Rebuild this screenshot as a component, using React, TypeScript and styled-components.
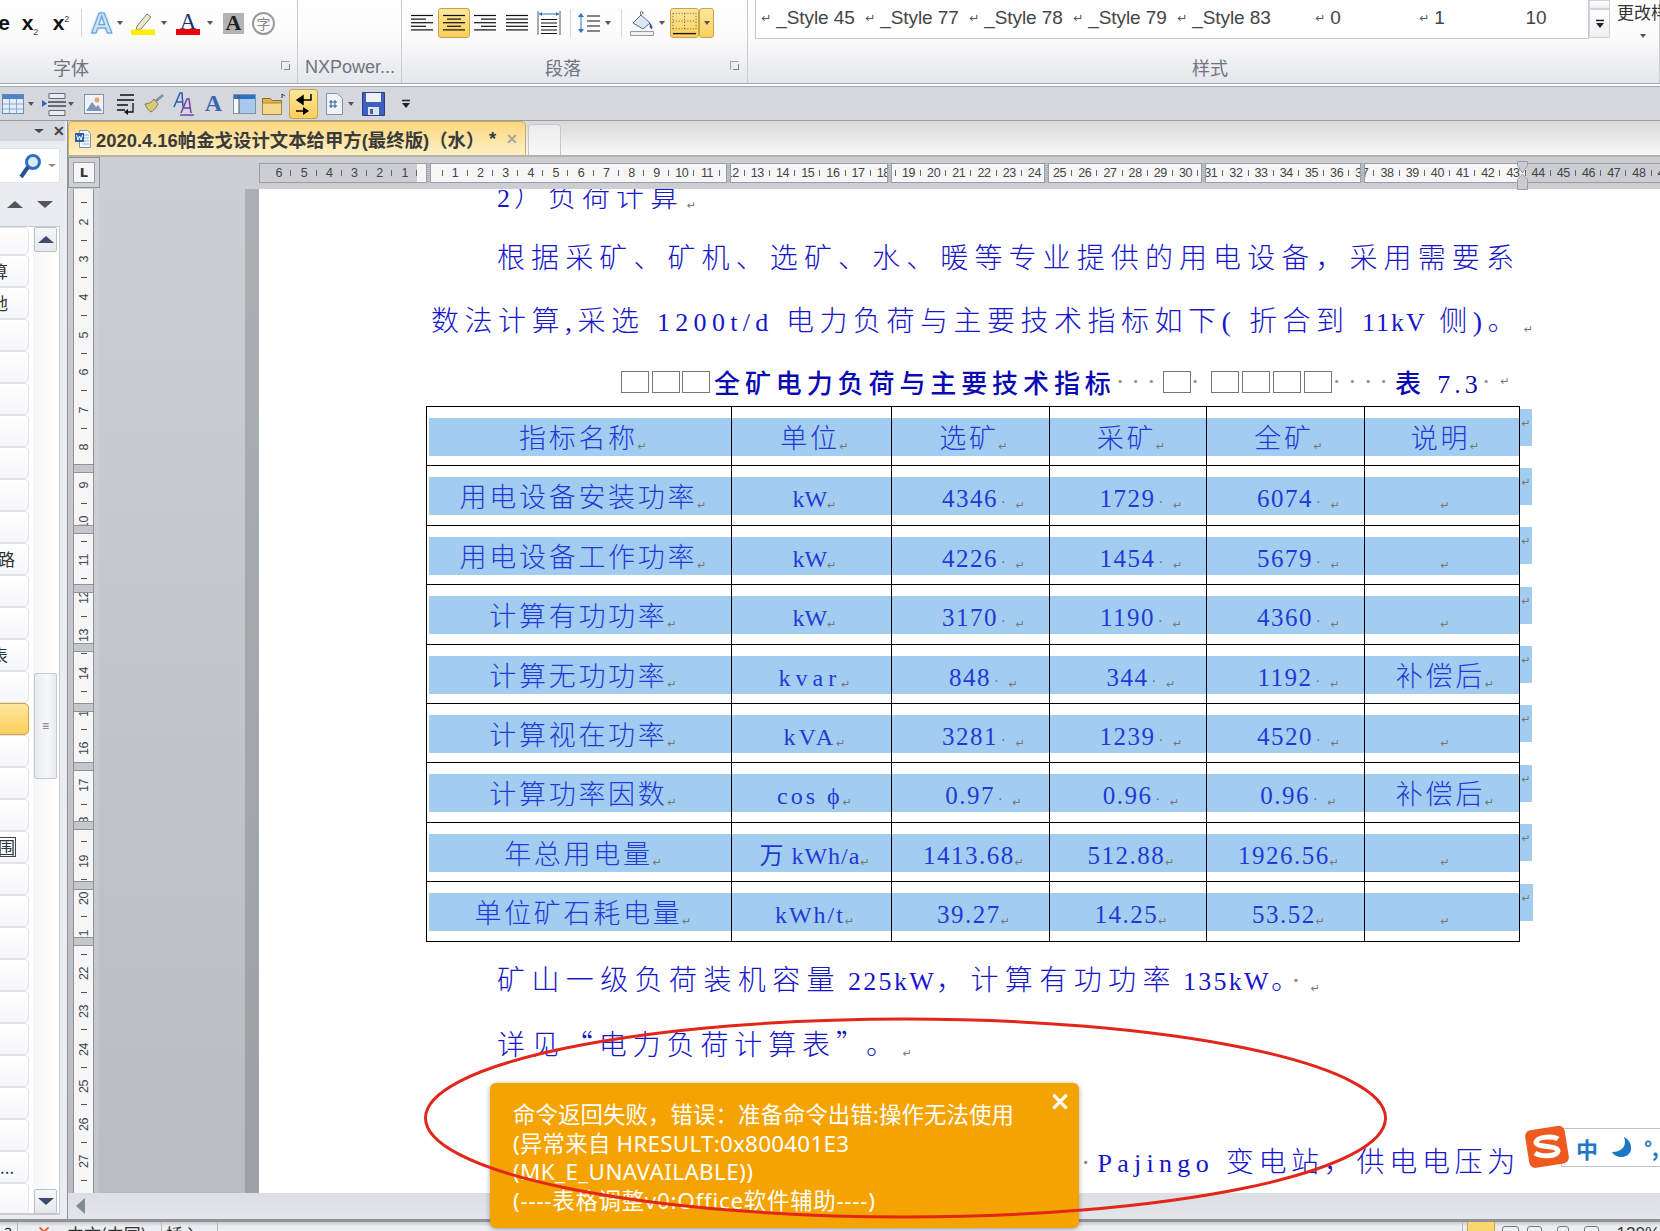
import React from 'react';
import styled, { createGlobalStyle } from 'styled-components';

const CJK = '"Noto Sans CJK SC", sans-serif';
const DOC_FONT = '"Liberation Serif", "Noto Sans CJK SC", serif';
const UI_FONT = '"Liberation Sans", "Noto Sans CJK SC", sans-serif';

const GlobalStyle = createGlobalStyle`
  html, body { margin: 0; padding: 0; background: #fff; }
  * { box-sizing: border-box; }
`;

const Screen = styled.div`
  position: relative;
  width: 1660px;
  height: 1231px;
  overflow: hidden;
  display: flex;
  flex-direction: column;
  font-family: ${UI_FONT};
`;

/* ribbon */
const Ribbon = styled.div`
  display: flex;
  flex: none;
  height: 87px;
  overflow: hidden;
  background: linear-gradient(#ffffff 0%, #fbfbfc 45%, #e6e8ec 95%);
  border-bottom: 4px double #a0a4ac;
`;

const Group = styled.div<{ $w: number; $grow?: boolean }>`
  display: flex;
  flex-direction: column;
  flex: ${(p) => (p.$grow ? '1' : 'none')};
  width: ${(p) => p.$w}px;
  height: 83px;
  border-right: 1px solid #c9ccd1;
`;

const Tools = styled.div<{ $top?: boolean }>`
  display: flex;
  align-items: ${(p) => (p.$top ? 'flex-start' : 'center')};
  height: 46px;
  flex: none;
`;

const GroupLabel = styled.div<{ $pad: number }>`
  display: flex;
  align-items: center;
  height: 30px;
  margin-top: 6px;
  padding-left: ${(p) => p.$pad}px;
  font-size: 18px;
  color: #6e7580;
  white-space: nowrap;
`;

const Launcher = styled.span<{ $x: number }>`
  position: absolute;
  left: ${(p) => p.$x}px;
  top: 61px;
  width: 9px;
  height: 9px;
  border: 1px solid #9ba0a8;
  border-right-color: transparent;
  border-bottom-color: transparent;
  &::after {
    content: '';
    position: absolute;
    right: -1px;
    bottom: -1px;
    width: 5px;
    height: 5px;
    border-right: 1px solid #7f858e;
    border-bottom: 1px solid #7f858e;
  }
`;

const Slot = styled.span<{ $ml?: number; $w: number; $active?: boolean }>`
  display: inline-flex;
  align-items: center;
  justify-content: center;
  flex: none;
  height: 30px;
  margin-left: ${(p) => p.$ml ?? 0}px;
  width: ${(p) => p.$w}px;
  border-radius: 3px;
  border: ${(p) => (p.$active ? '1px solid #c9a24a' : 'none')};
  background: ${(p) => (p.$active ? 'linear-gradient(#fde79a, #fbcf5c)' : 'transparent')};
`;

const Caret = styled.span<{ $ml?: number }>`
  flex: none;
  width: 0;
  height: 0;
  margin-left: ${(p) => p.$ml ?? 0}px;
  border-left: 3.5px solid transparent;
  border-right: 3.5px solid transparent;
  border-top: 4px solid #555;
`;

const Sep = styled.span<{ $ml: number }>`
  flex: none;
  width: 1px;
  height: 28px;
  margin-left: ${(p) => p.$ml}px;
  background: #d5d7db;
`;

const Script = styled.span`
  font: bold 21px "Liberation Sans", sans-serif;
  color: #111;
  sub, sup { font-size: 9px; font-weight: normal; color: #345; line-height: 0; }
`;

const GlowA = styled.span`
  font: bold 30px "Liberation Sans", sans-serif;
  color: #cfe4f7;
  -webkit-text-stroke: 1px #5b9bd5;
  text-shadow: 0 0 3px #9cc9ee;
`;

const ColorA = styled.span<{ $bar: string }>`
  display: flex;
  align-items: flex-start;
  justify-content: center;
  width: 24px;
  height: 23px;
  font: 23px/19px "Liberation Serif", serif;
  color: #22306b;
  border-bottom: 6px solid ${(p) => p.$bar};
`;

const ShadeA = styled.span`
  display: flex;
  align-items: center;
  justify-content: center;
  width: 21px;
  height: 21px;
  background: #b4b4b4;
  font: bold 22px "Liberation Serif", serif;
  color: #222;
`;

const CircleChar = styled.span`
  display: flex;
  align-items: center;
  justify-content: center;
  width: 23px;
  height: 23px;
  border: 2px solid #9b9b9b;
  border-radius: 50%;
  font-family: ${CJK};
  font-size: 14px;
  color: #888;
`;

const StyleBox = styled.div`
  display: flex;
  align-items: center;
  flex: none;
  margin-left: 7px;
  width: 834px;
  height: 39px;
  background: #fff;
  border: 1px solid #c8cbd0;
  border-top: none;
`;

const StyleCell = styled.span`
  display: flex;
  align-items: center;
  justify-content: center;
  flex: none;
  width: 104px;
  margin-top: -2px;
  font: 19px "Liberation Sans", sans-serif;
  letter-spacing: -0.1px;
  color: #444;
  white-space: nowrap;
  i {
    font: 12px "DejaVu Sans", sans-serif;
    margin-right: 5px;
    color: #555;
  }
`;

const StyleScroll = styled.div`
  display: flex;
  flex-direction: column;
  flex: none;
  width: 21px;
  height: 38px;
`;

const ScrollStep = styled.div<{ $h: number }>`
  display: flex;
  align-items: center;
  justify-content: center;
  height: ${(p) => p.$h}px;
  border: 1px solid #cfd2d6;
  background: linear-gradient(#fff, #eef0f3);
`;

const ChangeStyle = styled.div`
  position: relative;
  flex: none;
  width: 51px;
  padding: 2px 0 0 7px;
  font-family: ${CJK};
  font-size: 17px;
  line-height: 20px;
  color: #333;
  white-space: nowrap;
  overflow: hidden;
  height: 44px;
  ${Caret} {
    position: absolute;
    left: 30px;
    top: 34px;
  }
`;

/* quick toolbar */
const QuickBar = styled.div`
  display: flex;
  align-items: center;
  flex: none;
  height: 34px;
  background: #d4d7dc;
  border-bottom: 1px solid #979ca4;
`;

const BlueA = styled.span`
  font: bold 24px "Liberation Serif", serif;
  color: #3a66b0;
`;

/* workspace */
const Workspace = styled.div`
  display: flex;
  flex: none;
  height: 1098px;
`;

const LeftPanel = styled.div`
  display: flex;
  flex-direction: column;
  flex: none;
  width: 68px;
  height: 1098px;
  background: #e9ecf0;
  border-right: 1px solid #8f9398;
`;

const PanelHead = styled.div`
  display: flex;
  align-items: center;
  height: 20px;
  width: 65px;
  padding-left: 34px;
  background: #d5d8dd;
  font: bold 14px "Liberation Sans", sans-serif;
  color: #444;
  gap: 9px;
`;

const SearchBox = styled.div`
  display: flex;
  align-items: center;
  margin-top: 7px;
  height: 35px;
  width: 60px;
  padding-left: 19px;
  gap: 7px;
  background: #fff;
  border: 1px solid #dfe2e6;
  border-left: none;
`;

const NavRow = styled.div`
  display: flex;
  align-items: center;
  height: 43px;
  padding-left: 7px;
  gap: 14px;
`;

const Tri = styled.span<{ $down?: boolean; $w?: number; $c?: string }>`
  width: 0;
  height: 0;
  flex: none;
  border-left: ${(p) => p.$w ?? 8}px solid transparent;
  border-right: ${(p) => p.$w ?? 8}px solid transparent;
  ${(p) => (p.$down ? 'border-top' : 'border-bottom')}: ${(p) => (p.$w ?? 8) - 1}px solid ${(p) => p.$c ?? '#555'};
`;

const NavList = styled.div`
  display: flex;
  width: 60px;
  height: 989px;
  background: #fff;
  border: 1px solid #c8ccd1;
  border-left: none;
  border-bottom-width: 2px;
`;

const Rows = styled.div`
  flex: none;
  width: 33px;
  overflow: hidden;
`;

const NavRowItem = styled.div<{ $first?: boolean; $on?: boolean }>`
  display: flex;
  align-items: center;
  width: 29px;
  height: ${(p) => (p.$first ? 28 : 32)}px;
  overflow: hidden;
  border: 1px solid ${(p) => (p.$on ? '#c9a24a' : '#e2e4e8')};
  border-left: none;
  border-radius: 0 5px 5px 0;
  background: ${(p) => (p.$on ? 'linear-gradient(#fde79a, #fbcf5c)' : 'linear-gradient(#fff, #f6f7f9)')};
  font-family: ${CJK};
  font-size: 17px;
  color: #333;
`;

const NavText = styled.span<{ $x: number; $boxed?: boolean }>`
  flex: none;
  margin-left: ${(p) => p.$x}px;
  line-height: 18px;
  outline: ${(p) => (p.$boxed ? '1px solid #444' : 'none')};
`;

const NavScroll = styled.div`
  display: flex;
  flex-direction: column;
  flex: none;
  width: 25px;
  background: linear-gradient(90deg, #f5f6f7, #fff);
`;

const NavBtn = styled.div`
  display: flex;
  align-items: center;
  justify-content: center;
  flex: none;
  height: 25px;
  margin: 0 1px;
  border: 1px solid #bcc0c6;
  border-radius: 2px;
  background: linear-gradient(#f6f7f8, #e6e8eb);
`;

const NavThumb = styled.div`
  display: flex;
  align-items: center;
  justify-content: center;
  flex: none;
  height: 106px;
  margin: 421px 1px 410px;
  border: 1px solid #c4c7cc;
  border-radius: 2px;
  background: linear-gradient(90deg, #e9ebee, #f6f7f8 60%, #e8eaed);
  font-size: 12px;
  color: #777;
`;

const Main = styled.div`
  display: flex;
  flex-direction: column;
  flex: 1;
  min-width: 0;
`;

const TabBar = styled.div`
  display: flex;
  align-items: flex-end;
  flex: none;
  height: 36px;
  background: linear-gradient(#d9d9d9, #f8f8f8);
  border-bottom: 2px solid #b8b2a6;
`;

const ActiveTab = styled.div`
  display: flex;
  align-items: center;
  flex: none;
  width: 458px;
  height: 34px;
  padding-left: 6px;
  border: 1px solid #c8ab63;
  border-bottom: none;
  border-radius: 5px 5px 0 0;
  background: linear-gradient(#fdd77f, #fdf0c6);
  font-weight: bold;
  font-size: 18.4px;
  color: #3a3a3a;
  white-space: nowrap;
`;

const TabTitle = styled.span`
  margin-left: 5px;
  width: 393px;
`;

const TabClose = styled.span`
  margin-left: 10px;
  font-size: 14px;
  color: #a5a5a5;
`;

const EmptyTab = styled.div`
  flex: none;
  width: 33px;
  height: 31px;
  margin-left: 2px;
  border: 1px solid #c4c6ca;
  border-bottom: none;
  border-radius: 4px 4px 0 0;
  background: linear-gradient(#ededed, #f7f7f7);
`;

const RulerBar = styled.div`
  position: relative;
  display: flex;
  flex: none;
  height: 32px;
  background: #ccced3;
`;

const CornerBox = styled.div`
  display: flex;
  align-items: center;
  justify-content: center;
  flex: none;
  width: 32px;
  height: 31px;
  border: 1px solid #8f9398;
  background: #cdd0d5;
`;

const LTab = styled.div`
  display: flex;
  align-items: center;
  justify-content: center;
  width: 22px;
  height: 21px;
  background: #f6f6f7;
  border: 1px solid #9a9ea4;
  font: bold 13px "DejaVu Sans", sans-serif;
  color: #333;
`;

const HRulerTrack = styled.div`
  position: relative;
  flex: none;
  width: 1401px;
  height: 20px;
  margin: 6px 0 0 159px;
  background: #ccced3;
  border: 1px solid #9a9ea4;
  border-right: none;
`;

const HCells = styled.div`
  display: flex;
  height: 18px;
  overflow: hidden;
  padding-left: 6.2px;
`;

const HCell = styled.span<{ $white?: boolean }>`
  position: relative;
  display: flex;
  align-items: center;
  justify-content: center;
  flex: none;
  width: 25.2px;
  height: 18px;
  background: ${(p) => (p.$white ? '#f6f6f7' : 'transparent')};
  font: 12.5px "Liberation Sans", sans-serif;
  letter-spacing: -0.4px;
  color: #444;
  &::after {
    content: '';
    position: absolute;
    right: 0;
    top: 6px;
    width: 1px;
    height: 6px;
    background: #666;
  }
`;

const HMarker = styled.span<{ $x: number }>`
  position: absolute;
  top: -1px;
  left: ${(p) => p.$x}px;
  width: 5px;
  height: 20px;
  background: repeating-linear-gradient(#aab0b7 0 1px, #c4c8cd 1px 2px);
  border-left: 1px solid #9aa0a7;
  border-right: 1px solid #9aa0a7;
`;

const Hourglass = styled.svg`
  position: absolute;
  top: -3px;
  left: 1257px;
`;

const DocRow = styled.div`
  display: flex;
  flex: none;
  height: 1004px;
  background: linear-gradient(#cbced3, #b9bcc1);
`;

const VRuler = styled.div`
  position: relative;
  flex: none;
  width: 21px;
  margin-left: 5px;
  height: 1004px;
  overflow: hidden;
  background: #f6f6f7;
  border-left: 1px solid #8f9398;
  border-right: 1px solid #8f9398;
`;

const VCells = styled.div`
  display: flex;
  flex-direction: column;
  margin-top: -23.4px;
`;

const VCell = styled.span`
  position: relative;
  display: flex;
  align-items: center;
  justify-content: center;
  flex: none;
  height: 37.6px;
  &::after {
    content: '';
    position: absolute;
    bottom: 0;
    left: 7px;
    width: 6px;
    height: 1px;
    background: #555;
  }
`;

const VNum = styled.span`
  writing-mode: vertical-rl;
  transform: rotate(180deg);
  font: 12.5px "Liberation Sans", sans-serif;
  letter-spacing: -0.4px;
  color: #444;
`;

const VMarker = styled.span<{ $y: number }>`
  position: absolute;
  left: 0;
  right: 0;
  top: ${(p) => p.$y}px;
  height: 9px;
  background: #c4c7cc;
  border-top: 1px solid #8f9398;
  border-bottom: 1px solid #8f9398;
`;

const Gutter = styled.div`
  flex: none;
  width: 151px;
  border-left: 5px solid rgba(255, 255, 255, 0.12);
`;

const PageEdge = styled.div`
  flex: none;
  width: 14px;
  background: rgba(0, 0, 0, 0.15);
`;

const Page = styled.div`
  flex: 1;
  overflow: hidden;
  background: #fff;
  font-family: ${DOC_FONT};
  color: #1717c9;
`;

const Paper = styled.div`
  width: 1401px;
  margin-top: -22px;
`;

const Line = styled.div<{ $left?: number; $ls: number; $right?: number; $h?: number }>`
  height: ${(p) => p.$h ?? 62}px;
  line-height: 62px;
  padding-left: ${(p) => p.$left ?? 0}px;
  padding-right: ${(p) => p.$right ?? 0}px;
  text-align: ${(p) => (p.$right ? 'right' : 'left')};
  font-size: 28px;
  font-weight: 300;
  letter-spacing: ${(p) => p.$ls}px;
  white-space: nowrap;
`;

const Latin = styled.span<{ $ls: number; $ml?: number }>`
  font-size: 26px;
  font-weight: normal;
  margin-left: ${(p) => p.$ml ?? 0}px;
  letter-spacing: ${(p) => p.$ls}px;
`;

const CjkRun = styled.span`
  font-family: ${CJK};
`;

const FullStop = styled.span`
  margin-left: 10px;
`;

const Mark = styled.span`
  font: 11px "DejaVu Sans", sans-serif;
  letter-spacing: 0;
  color: #777;
  margin-left: 3px;
  vertical-align: -2px;
`;

const Dots = styled.span`
  color: #888;
  letter-spacing: 7px;
`;

const Caption = styled.div`
  display: flex;
  align-items: center;
  height: 49px;
  padding-left: 362px;
  font-size: 26px;
  font-weight: 500;
  letter-spacing: 4.9px;
  color: #0a0ab4;
  white-space: nowrap;
`;

const CaptionText = styled.span`
  margin-left: 4px;
`;

const MissingGlyph = styled.span<{ $ml?: number }>`
  flex: none;
  width: 28px;
  height: 22px;
  margin-left: ${(p) => p.$ml ?? 3}px;
  border: 1px solid #777;
`;

const DocTable = styled.table`
  border-collapse: collapse;
  table-layout: fixed;
  margin-left: 167px;
  width: 1106px;
`;

const Cell = styled.td<{ $end?: boolean; $first?: boolean }>`
  height: 59.4px;
  padding: 0 0 0 ${(p) => (p.$first ? 2 : 0)}px;
  vertical-align: top;
  border: ${(p) => (p.$end ? 'none' : '1.5px solid #000')};
`;

const Bar = styled.div<{ $end?: boolean; $shift?: boolean }>`
  height: ${(p) => (p.$end ? 37 : 38)}px;
  margin-top: ${(p) => (p.$end ? 2 : 11)}px;
  padding-left: ${(p) => (p.$end ? 0 : p.$shift ? 26 : 6)}px;
  background: #a3cdf0;
  text-align: center;
  font-size: 27px;
  font-weight: 300;
  line-height: 42px;
  letter-spacing: 2.7px;
  color: #1f3ad6;
  white-space: nowrap;
  overflow: hidden;
  ${Mark} {
    margin-left: 0;
  }
`;

const Value = styled.span<{ $ls?: number; $size?: number }>`
  font-size: ${(p) => p.$size ?? 25}px;
  font-weight: normal;
  letter-spacing: ${(p) => p.$ls ?? 1.5}px;
`;

const CellDot = styled.span`
  font: 14px "Liberation Serif", serif;
  letter-spacing: 0;
  color: #667;
  margin: 0 10px 0 3px;
`;

const EndMark = styled(Mark)`
  display: block;
  line-height: 30px;
  text-align: center;
`;

const TableGap = styled.div`
  height: 8px;
`;

const HScroll = styled.div`
  display: flex;
  align-items: center;
  flex: none;
  height: 26px;
  padding-left: 8px;
  background: linear-gradient(#dcdfe4, #e2e5ea);
`;

const HArrow = styled.span`
  width: 0;
  height: 0;
  border-top: 8px solid transparent;
  border-bottom: 8px solid transparent;
  border-right: 9px solid #7f8c90;
`;

const StatusBar = styled.div`
  display: flex;
  flex: none;
  height: 12px;
  overflow: hidden;
  background: linear-gradient(#c9ccd1, #eceef1 50%);
  border-top: 3px solid #8f9398;
  font-family: ${CJK};
  font-size: 17px;
  color: #333;
`;

const StatusItem = styled.span<{ $w: number; $line?: boolean }>`
  display: flex;
  flex: none;
  width: ${(p) => p.$w}px;
  height: 20px;
  line-height: 24px;
  padding-left: 4px;
  border-right: ${(p) => (p.$line ? '1px solid #b4b7bc' : 'none')};
  white-space: nowrap;
`;

const StatusX = styled.span`
  margin: -3px 16px 0 15px;
  color: #e2552b;
`;

const StatusSpacer = styled.span`
  flex: 1;
  border-right: 1px solid #b4b7bc;
  margin-right: 4px;
`;

const ViewBtn = styled.span<{ $ml: number; $w: number; $active?: boolean }>`
  flex: none;
  width: ${(p) => p.$w}px;
  height: 20px;
  margin-left: ${(p) => p.$ml}px;
  margin-top: ${(p) => (p.$active ? -2 : 4)}px;
  border: 1px solid ${(p) => (p.$active ? '#c9a24a' : '#777')};
  border-radius: 3px;
  background: ${(p) => (p.$active ? '#fbd56e' : '#eef0f2')};
`;

const Zoom = styled.span`
  margin-left: 18px;
  font: 17px/24px "Liberation Sans", sans-serif;
`;

/* overlays */
const Ring = styled.svg`
  position: absolute;
  left: 0;
  top: 0;
  pointer-events: none;
`;

const Toast = styled.div`
  position: absolute;
  left: 490px;
  top: 1083px;
  width: 589px;
  height: 145px;
  padding: 18px 20px 0 23px;
  border-radius: 6px;
  background: #f5a300;
  box-shadow: 0 1px 5px rgba(0, 0, 0, 0.35);
  font-family: "Noto Sans", ${CJK};
  font-size: 22.4px;
  line-height: 28.6px;
  color: #fff;
`;

const ToastLine = styled.div<{ $ls: number }>`
  letter-spacing: ${(p) => p.$ls}px;
  white-space: nowrap;
`;

const ToastClose = styled.span`
  position: absolute;
  right: 8px;
  top: 3px;
  font: bold 26px "DejaVu Sans", sans-serif;
`;

const Ime = styled.div`
  position: absolute;
  left: 1525px;
  top: 1126px;
  display: flex;
  align-items: center;
  width: 140px;
  height: 42px;
`;

const ImeBody = styled.div`
  display: flex;
  align-items: center;
  position: absolute;
  left: 36px;
  top: 2px;
  width: 110px;
  height: 39px;
  padding-left: 14px;
  gap: 12px;
  background: #fff;
  border: 1px solid #bfc2c6;
  color: #1b78c4;
  font: bold 22px ${CJK};
`;

const ImeLogo = styled.svg`
  position: relative;
  z-index: 1;
`;

const ImeDots = styled.span`
  font-size: 20px;
`;

/* icons */
function LinesIcon({ rows, w = 22 }: { rows: [number, number][]; w?: number }) {
  return (
    <svg width={w} height={20} viewBox={`0 0 ${w} 20`}>
      {rows.map(([a, b], i) => (
        <path key={i} d={`M${a} ${2.5 + i * 3.6}H${b}`} stroke="#111" strokeWidth="1.2" />
      ))}
    </svg>
  );
}

function DistributeIcon() {
  return (
    <svg width="24" height="24" viewBox="0 0 24 24">
      <path d="M1 0v24M23 0v24" stroke="#556" />
      <path d="M2 3h20" stroke="#2f6fc4" />
      <path d="M2 3l3-2v4zM22 3l-3-2v4z" fill="#2f6fc4" />
      <path d="M4 8.500h16M4 12h16M4 15.500h16M4 19h16M4 22.500h16" stroke="#111" strokeWidth="1.2" />
    </svg>
  );
}

function Highlighter() {
  return (
    <svg width="24" height="24" viewBox="0 0 24 24">
      <path d="M6 15 16 3l4 3-10 12-5 1z" fill="#efe6c8" stroke="#7d7d86" />
      <path d="M0 18.500h24V24H0z" fill="#ffee00" />
    </svg>
  );
}

function Bucket() {
  return (
    <svg width="24" height="26" viewBox="0 0 24 26">
      <path d="M3 13 11 5l9 8-7 6z" fill="#dfe7f2" stroke="#4a6d9e" />
      <path d="M11 5c-2-4 2-5 2-1" fill="none" stroke="#445" />
      <path d="M20 13c2 2 3 4 2 6-2 0-3-3-2-6z" fill="#2c57a8" />
      <path d="M.5 21.500h23v4H.5z" fill="#f1f1f1" stroke="#999" />
    </svg>
  );
}

function SpacingIcon() {
  return (
    <svg width="23" height="20" viewBox="0 0 23 20">
      <path d="M4 0 7 4H1zM4 20 7 16H1z" fill="#2f6fc4" />
      <path d="M4 4v12" stroke="#2f6fc4" />
      <path d="M10 3h13M10 8h13M10 13h13M10 18h13" stroke="#111" strokeWidth="1.2" />
    </svg>
  );
}

function BorderBtn() {
  return (
    <svg width="28" height="28" viewBox="0 0 28 28">
      <path d="M2 4h24M2 12h24M2 20h24M2 4v16M14 4v16M26 4v16" stroke="#555" strokeDasharray="1 2" fill="none" />
      <path d="M2 25h24" stroke="#111" strokeWidth="1.4" />
    </svg>
  );
}

function TableIcon() {
  return (
    <svg width="22" height="20" viewBox="0 0 22 20">
      <rect x=".5" y=".5" width="21" height="19" fill="#e4eefa" stroke="#6c8fbe" />
      <path d="M.5.500h21V5H.5z" fill="#4d82c6" />
      <path d="M7.500 5v14M14.500 5v14M1 10h20M1 15h20" stroke="#8aa8d0" />
    </svg>
  );
}

function RowInsert() {
  return (
    <svg width="25" height="24" viewBox="0 0 25 24">
      <path d="M0 8 5 11.500 0 15z" fill="#2a66c0" />
      <path d="M7 1.500h16v5H7zM7 18.500h16v5H7z" fill="#e8edf4" stroke="#667" />
      <path d="M6 10h18M6 14h18" stroke="#445" strokeWidth="1.5" />
    </svg>
  );
}

function PictureIcon() {
  return (
    <svg width="20" height="20" viewBox="0 0 20 20">
      <rect x=".5" y=".5" width="19" height="19" fill="#eef3fa" stroke="#7f93ad" />
      <circle cx="13" cy="6" r="2.500" fill="#f0a060" />
      <path d="M2 17 8 8l4 5 2-2 4 6z" fill="#7c96b8" />
    </svg>
  );
}

function ListIcon() {
  return (
    <svg width="19" height="22" viewBox="0 0 19 22">
      <path d="M4 2h14M1 7h17M1 12h11M1 17h8" stroke="#111" strokeWidth="1.4" />
      <path d="M17 10v9h-6" stroke="#111" strokeWidth="1.3" fill="none" />
      <path d="M8 19l4-3v6z" fill="#111" />
    </svg>
  );
}

function Broom() {
  return (
    <svg width="20" height="20" viewBox="0 0 20 20">
      <path d="M12 7 19 1" stroke="#7b8fa8" strokeWidth="2.500" />
      <path d="M1 10c4 0 7-2 9-5l4 5c-2 4-5 7-7 8-2-1-5-5-6-8z" fill="#d9c77a" stroke="#857a4a" />
    </svg>
  );
}

function DoubleA() {
  return (
    <svg width="22" height="24" viewBox="0 0 22 24">
      <path d="M1 15 7 1h2l1 14M3.500 10h6" stroke="#2c5cb0" strokeWidth="1.500" fill="none" />
      <path d="M8 21 14 7h2l2 14M10 16h7" stroke="#7a3fa5" strokeWidth="1.500" fill="none" />
      <path d="M7 23h14" stroke="#7a3fa5" strokeWidth="1.500" />
    </svg>
  );
}

function WindowIcon() {
  return (
    <svg width="23" height="20" viewBox="0 0 23 20">
      <rect x=".5" y=".5" width="22" height="19" fill="#f4f7fb" stroke="#7d92ac" />
      <path d="M1 1h21v4H1z" fill="#2f6fc4" />
      <path d="M6 5h16v14H6z" fill="#a8c8ee" />
      <path d="M6 1v18" stroke="#555" />
    </svg>
  );
}

function FolderIcon() {
  return (
    <svg width="24" height="22" viewBox="0 0 24 22">
      <path d="M.5 5.500h8l2 2h9v14H.5z" fill="#e0b44a" stroke="#8a6d2a" />
      <path d="M.5 10h19v11.500H.5z" fill="#f4d98a" stroke="#a98a3c" />
      <path d="M20 5V1l3 2" stroke="#333" fill="none" />
    </svg>
  );
}

function ArrowsIcon() {
  return (
    <svg width="20" height="26" viewBox="0 0 20 26">
      <path d="M17 3v6H7" stroke="#000" strokeWidth="1.500" fill="none" />
      <path d="M3 9 9 5v8zM2 20h12" fill="#000" stroke="#000" strokeWidth="1.500" />
      <path d="M15 20 9 16v8z" fill="#000" />
    </svg>
  );
}

function DocHash() {
  return (
    <svg width="17" height="22" viewBox="0 0 17 22">
      <path d="M.5.500h11l5 5v16H.5z" fill="#eef3fa" stroke="#7d92ac" />
      <path d="M5 7v8M9 7v8M3 9h8M3 13h8" stroke="#3c5a86" />
    </svg>
  );
}

function SaveIcon() {
  return (
    <svg width="23" height="24" viewBox="0 0 23 24">
      <path d="M.5.500h22v23H.5z" fill="#3f5fc0" stroke="#2d3f86" />
      <path d="M4 1h15v9H4z" fill="#eef2f8" />
      <path d="M6 15h11v8H6z" fill="#dfe4ec" />
      <path d="M8 17h3v5H8z" fill="#3f5fc0" />
    </svg>
  );
}

function DocTabIcon() {
  return (
    <svg width="16" height="18" viewBox="0 0 16 18">
      <path d="M4.500.500h8l3 3v14h-11z" fill="#f2f5f9" stroke="#7d92ac" />
      <path d="M8 5h6M8 8h6M8 11h6M8 14h6" stroke="#9bb0c9" />
      <path d="M0 3h9v9H0z" fill="#2b5fa8" />
      <path d="M1.500 5l1.500 5 1.500-4 1.500 4 1.500-5" stroke="#fff" fill="none" />
    </svg>
  );
}

function Magnifier() {
  return (
    <svg width="22" height="26" viewBox="0 0 22 26">
      <circle cx="14" cy="9" r="6.500" fill="#d9ecfa" stroke="#2f6fc4" strokeWidth="3" />
      <path d="M9 14 2 24" stroke="#27508f" strokeWidth="4" />
    </svg>
  );
}

function MoreIcon() {
  return (
    <svg width="8" height="10" viewBox="0 0 8 10">
      <path d="M0 1.500h8" stroke="#222" strokeWidth="1.500" />
      <path d="M0 4h8L4 9z" fill="#222" />
    </svg>
  );
}

function ImeMoon() {
  return (
    <svg width="22" height="24" viewBox="0 0 22 24">
      <path d="M14 1c3 8-1 15-12 15 3 6 16 8 19-2 1-5-2-11-7-13z" fill="#1b78c4" />
    </svg>
  );
}

const hMarkers = [466, 627, 784, 941, 1100];
const vMarkers = [275, 336, 395, 454, 514, 573, 632, 692, 748];

const navTexts: Record<number, { t: string; x: number; boxed?: boolean }> = {
  1: { t: '算', x: -9 },
  2: { t: '地', x: -9 },
  10: { t: '路', x: -2 },
  13: { t: '表', x: -9 },
  19: { t: '围', x: -2, boxed: true },
  29: { t: '...', x: 0 },
};

type Row = { name: string; unit: string; unitLs: number; vals: string[]; note: string; dot: boolean };

const rows: Row[] = [
  { name: '用电设备安装功率', unit: 'kW', unitLs: 0, vals: ['4346', '1729', '6074'], note: '', dot: true },
  { name: '用电设备工作功率', unit: 'kW', unitLs: 0, vals: ['4226', '1454', '5679'], note: '', dot: true },
  { name: '计算有功功率', unit: 'kW', unitLs: 0, vals: ['3170', '1190', '4360'], note: '', dot: true },
  { name: '计算无功功率', unit: 'kvar', unitLs: 5, vals: ['848', '344', '1192'], note: '补偿后', dot: true },
  { name: '计算视在功率', unit: 'kVA', unitLs: 3, vals: ['3281', '1239', '4520'], note: '', dot: true },
  { name: '计算功率因数', unit: 'cos ϕ', unitLs: 3, vals: ['0.97', '0.96', '0.96'], note: '补偿后', dot: true },
  { name: '年总用电量', unit: '万 kWh/a', unitLs: 1, vals: ['1413.68', '512.88', '1926.56'], note: '', dot: false },
  { name: '单位矿石耗电量', unit: 'kWh/t', unitLs: 2, vals: ['39.27', '14.25', '53.52'], note: '', dot: false },
];

const pil = '↵';

export default function App() {
  return (
    <Screen>
      <GlobalStyle />
      <Ribbon>
        <Group $w={298}>
          <Tools>
            <Slot $w={8}><Script>e</Script></Slot>
            <Slot $ml={13} $w={18}><Script>x<sub>2</sub></Script></Slot>
            <Slot $ml={13} $w={18}><Script>x<sup>2</sup></Script></Slot>
            <Sep $ml={11} />
            <Slot $ml={8} $w={23}><GlowA>A</GlowA></Slot>
            <Caret $ml={4} />
            <Slot $ml={8} $w={24}><Highlighter /></Slot>
            <Caret $ml={6} />
            <Slot $ml={9} $w={24}><ColorA $bar="#e8000f">A</ColorA></Slot>
            <Caret $ml={7} />
            <Slot $ml={10} $w={21}><ShadeA>A</ShadeA></Slot>
            <Slot $ml={8} $w={23}><CircleChar>字</CircleChar></Slot>
          </Tools>
          <GroupLabel $pad={53}>字体</GroupLabel>
        </Group>
        <Group $w={104}>
          <Tools />
          <GroupLabel $pad={7}>NXPower...</GroupLabel>
        </Group>
        <Group $w={346}>
          <Tools>
            <Slot $ml={9} $w={22}><LinesIcon rows={[[0, 22], [0, 15], [0, 22], [0, 15], [0, 22]]} /></Slot>
            <Slot $ml={5} $w={32} $active><LinesIcon rows={[[0, 22], [4, 18], [0, 22], [4, 18], [0, 22]]} /></Slot>
            <Slot $ml={4} $w={22}><LinesIcon rows={[[0, 22], [7, 22], [0, 22], [7, 22], [0, 22]]} /></Slot>
            <Slot $ml={10} $w={22}><LinesIcon rows={[[0, 22], [0, 22], [0, 22], [0, 22], [0, 22]]} /></Slot>
            <Slot $ml={9} $w={24}><DistributeIcon /></Slot>
            <Sep $ml={9} />
            <Slot $ml={6} $w={23}><SpacingIcon /></Slot>
            <Caret $ml={5} />
            <Sep $ml={10} />
            <Slot $ml={8} $w={24}><Bucket /></Slot>
            <Caret $ml={5} />
            <Slot $ml={5} $w={29} $active><BorderBtn /></Slot>
            <Slot $w={15} $active><Caret /></Slot>
          </Tools>
          <GroupLabel $pad={143}>段落</GroupLabel>
        </Group>
        <Group $w={912} $grow>
          <Tools $top>
            <StyleBox>
              {['_Style 45', '_Style 77', '_Style 78', '_Style 79', '_Style 83'].map((s) => (
                <StyleCell key={s}><i>{pil}</i>{s}</StyleCell>
              ))}
              <StyleCell><i>{pil}</i>0</StyleCell>
              <StyleCell><i>{pil}</i>1</StyleCell>
              <StyleCell>10</StyleCell>
            </StyleBox>
            <StyleScroll>
              <ScrollStep $h={9} />
              <ScrollStep $h={29}><MoreIcon /></ScrollStep>
            </StyleScroll>
            <ChangeStyle>更改样式<Caret /></ChangeStyle>
          </Tools>
          <GroupLabel $pad={444}>样式</GroupLabel>
        </Group>
      </Ribbon>
      <Launcher $x={281} />
      <Launcher $x={730} />

      <QuickBar>
        <Slot $ml={2} $w={22}><TableIcon /></Slot>
        <Caret $ml={4} />
        <Slot $ml={8} $w={25}><RowInsert /></Slot>
        <Caret $ml={1} />
        <Slot $ml={10} $w={20}><PictureIcon /></Slot>
        <Slot $ml={12} $w={19}><ListIcon /></Slot>
        <Slot $ml={9} $w={20}><Broom /></Slot>
        <Slot $ml={9} $w={22}><DoubleA /></Slot>
        <Slot $ml={10} $w={17}><BlueA>A</BlueA></Slot>
        <Slot $ml={11} $w={23}><WindowIcon /></Slot>
        <Slot $ml={6} $w={24}><FolderIcon /></Slot>
        <Slot $ml={3} $w={29} $active><ArrowsIcon /></Slot>
        <Slot $ml={8} $w={17}><DocHash /></Slot>
        <Caret $ml={5} />
        <Slot $ml={8} $w={23}><SaveIcon /></Slot>
        <Slot $ml={17} $w={8}><MoreIcon /></Slot>
      </QuickBar>

      <Workspace>
        <LeftPanel>
          <PanelHead><Tri $down $w={5} $c="#444" />✕</PanelHead>
          <SearchBox><Magnifier /><Tri $down $w={4} $c="#888" /></SearchBox>
          <NavRow><Tri $w={8} /><Tri $down $w={8} /></NavRow>
          <NavList>
            <Rows>
              {Array.from({ length: 31 }, (_, i) => (
                <NavRowItem key={i} $first={i === 0} $on={i === 15}>
                  {navTexts[i] && <NavText $x={navTexts[i].x} $boxed={navTexts[i].boxed}>{navTexts[i].t}</NavText>}
                </NavRowItem>
              ))}
            </Rows>
            <NavScroll>
              <NavBtn><Tri $w={8} $c="#3d4a6b" /></NavBtn>
              <NavThumb>≡</NavThumb>
              <NavBtn><Tri $down $w={8} $c="#3d4a6b" /></NavBtn>
            </NavScroll>
          </NavList>
        </LeftPanel>

        <Main>
          <TabBar>
            <ActiveTab>
              <DocTabIcon />
              <TabTitle>2020.4.16帕金戈设计文本给甲方(最终版)（水）</TabTitle>
              <span>*</span>
              <TabClose>✕</TabClose>
            </ActiveTab>
            <EmptyTab />
          </TabBar>

          <RulerBar>
            <CornerBox><LTab>L</LTab></CornerBox>
            <HRulerTrack>
              <HCells>
                {Array.from({ length: 56 }, (_, i) => {
                  const n = i - 6;
                  return <HCell key={i} $white={n >= 0 && n <= 43}>{n === 0 ? '' : Math.abs(n)}</HCell>;
                })}
              </HCells>
              <HMarker $x={166} />
              {hMarkers.map((x) => <HMarker key={x} $x={x} />)}
              <Hourglass width="11" height="29" viewBox="0 0 11 29">
                <path d="M.5.500h10v4L5.500 12 .5 4.500zM.5 28.500h10v-10L5.500 13 .5 18.500z" fill="#c9ccd1" stroke="#9a9ea4" />
              </Hourglass>
            </HRulerTrack>
          </RulerBar>

          <DocRow>
            <VRuler>
              <VCells>
                {Array.from({ length: 28 }, (_, i) => (
                  <VCell key={i}><VNum>{i + 1}</VNum></VCell>
                ))}
              </VCells>
              {vMarkers.map((y) => <VMarker key={y} $y={y} />)}
            </VRuler>
            <Gutter />
            <PageEdge />
            <Page>
              <Paper>
                <Line $left={238} $ls={6} $h={61}><Latin $ls={4}>2</Latin>）负荷计算<Mark>{pil}</Mark></Line>
                <Line $left={238} $ls={6.1} $h={63}>根据采矿、矿机、选矿、水、暖等专业提供的用电设备，采用需要系</Line>
                <Line $left={172} $ls={5.5} $h={66}>
                  数法计算,采选 <Latin $ls={5.3}>1200t/d</Latin> 电力负荷与主要技术指标如下( 折合到 <Latin $ls={2}>11kV</Latin> 侧)。<Mark>{pil}</Mark>
                </Line>
                <Caption>
                  <MissingGlyph $ml={0} /><MissingGlyph /><MissingGlyph $ml={2} />
                  <CaptionText>全矿电力负荷与主要技术指标</CaptionText>
                  <Dots>···</Dots>
                  <MissingGlyph $ml={0} />
                  <Dots>·</Dots>
                  <MissingGlyph $ml={5} /><MissingGlyph /><MissingGlyph /><MissingGlyph />
                  <Dots>····</Dots>
                  <span>表 <Latin $ls={4}>7.3</Latin></span>
                  <Dots>·</Dots>
                  <Mark>{pil}</Mark>
                </Caption>
                <DocTable>
                  <colgroup>
                    <col style={{ width: 305 }} />
                    <col style={{ width: 160 }} />
                    <col style={{ width: 158 }} />
                    <col style={{ width: 157 }} />
                    <col style={{ width: 158 }} />
                    <col style={{ width: 155 }} />
                    <col style={{ width: 13 }} />
                  </colgroup>
                  <tbody>
                    <tr>
                      <Cell $first><Bar>指标名称<Mark>{pil}</Mark></Bar></Cell>
                      {['单位', '选矿', '采矿', '全矿', '说明'].map((h) => (
                        <Cell key={h}><Bar>{h}<Mark>{pil}</Mark></Bar></Cell>
                      ))}
                      <Cell $end><Bar $end><EndMark>{pil}</EndMark></Bar></Cell>
                    </tr>
                    {rows.map((r) => (
                      <tr key={r.name}>
                        <Cell $first><Bar>{r.name}<Mark>{pil}</Mark></Bar></Cell>
                        <Cell><Bar><Value $ls={r.unitLs} $size={24}>{r.unit}</Value><Mark>{pil}</Mark></Bar></Cell>
                        {r.vals.map((v, i) => (
                          <Cell key={i}>
                            <Bar $shift={r.dot}><Value>{v}</Value>{r.dot && <CellDot>·</CellDot>}<Mark>{pil}</Mark></Bar>
                          </Cell>
                        ))}
                        <Cell><Bar>{r.note}<Mark>{pil}</Mark></Bar></Cell>
                        <Cell $end><Bar $end><EndMark>{pil}</EndMark></Bar></Cell>
                      </tr>
                    ))}
                  </tbody>
                </DocTable>
                <TableGap />
                <Line $left={238} $ls={6.4}>
                  矿山一级负荷装机容量<Latin $ls={2.3} $ml={7}>225kW</Latin>，计算有功功率<Latin $ls={2.3} $ml={6}>135kW</Latin>。<Dots>·</Dots><Mark>{pil}</Mark>
                </Line>
                <Line $left={238} $ls={5.9}><CjkRun>详见“电力负荷计算表”<FullStop>。</FullStop></CjkRun><Mark>{pil}</Mark></Line>
                <Line $ls={0} $h={58} />
                <Line $right={140} $ls={4.7}><Dots>·</Dots><Latin $ls={5.3}>Pajingo</Latin> 变电站，供电电压为</Line>
              </Paper>
            </Page>
          </DocRow>

          <HScroll><HArrow /></HScroll>
        </Main>
      </Workspace>

      <StatusBar>
        <StatusItem $w={18} $line>?</StatusItem>
        <StatusItem $w={144} $line>
          <StatusX>✕</StatusX>中文(中国)
        </StatusItem>
        <StatusItem $w={56} $line>插入</StatusItem>
        <StatusSpacer />
        <ViewBtn $ml={0} $w={28} $active />
        <ViewBtn $ml={7} $w={17} />
        <ViewBtn $ml={8} $w={15} />
        <ViewBtn $ml={15} $w={12} />
        <ViewBtn $ml={15} $w={15} />
        <Zoom>120%</Zoom>
      </StatusBar>

      <Toast>
        <ToastLine $ls={0.1}>命令返回失败，错误：准备命令出错:操作无法使用</ToastLine>
        <ToastLine $ls={0.25}>(异常来自 HRESULT:0x800401E3</ToastLine>
        <ToastLine $ls={0.4}>(MK_E_UNAVAILABLE))</ToastLine>
        <ToastLine $ls={0.75}>(----表格调整v0:Office软件辅助----)</ToastLine>
        <ToastClose>×</ToastClose>
      </Toast>

      <Ring width="1660" height="1231" viewBox="0 0 1660 1231">
        <ellipse cx="905.500" cy="1118" rx="480" ry="99" fill="none" stroke="#e2261b" strokeWidth="3" />
      </Ring>

      <Ime>
        <ImeBody>中<ImeMoon /><ImeDots>°,</ImeDots></ImeBody>
        <ImeLogo width="44" height="42" viewBox="0 0 44 42">
          <rect x="2" y="2" width="40" height="38" rx="6" fill="#ee5a1e" transform="rotate(-9 21 21)" />
          <path d="M33 13c-4-3-20-3-22 3-1 6 22 3 22 9-1 6-17 6-23 2" fill="none" stroke="#fff" strokeWidth="5" />
        </ImeLogo>
      </Ime>
    </Screen>
  );
}
